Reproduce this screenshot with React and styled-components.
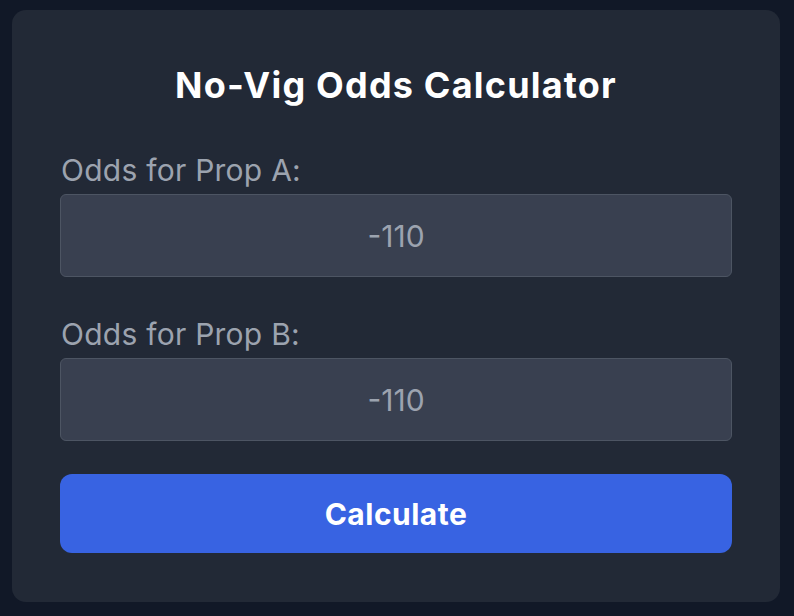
import React from "react";
import styled, { createGlobalStyle } from "styled-components";

const Global = createGlobalStyle`
  html, body {
    margin: 0;
    padding: 0;
    background: #111827;
  }
  body {
    font-family: Inter, "Noto Sans", "Liberation Sans", sans-serif;
  }
  * { box-sizing: border-box; }
`;

const Page = styled.div`
  width: 794px;
  height: 616px;
  padding: 10px 14px 14px 12px;
  background: #111827;
`;

const Card = styled.div`
  width: 768px;
  background: #222936;
  border-radius: 14px;
  padding: 53px 48px 49px;
  display: flex;
  flex-direction: column;
`;

const Title = styled.h1`
  margin: 0 0 45px;
  font-size: 36px;
  line-height: 44px;
  font-weight: 700;
  letter-spacing: 1.2px;
  color: #ffffff;
  text-align: center;
`;

const Field = styled.div`
  display: flex;
  flex-direction: column;
  gap: 6px;
  margin-bottom: ${(p) => p.$after}px;
`;

const Label = styled.label`
  font-size: 30px;
  line-height: 36px;
  letter-spacing: 0.25px;
  color: #9ca3af;
  padding-left: 1px;
`;

const Input = styled.input`
  height: 83px;
  width: 100%;
  background: #394050;
  border: 1.5px solid #4d5563;
  border-radius: 6px;
  color: #9ca3af;
  font-family: inherit;
  font-size: 30px;
  text-align: center;
  outline: none;
  &::placeholder { color: #9ca3af; opacity: 1; }
`;

const Button = styled.button`
  height: 79px;
  width: 100%;
  border: none;
  border-radius: 12px;
  background: #3863e2;
  color: #ffffff;
  font-family: inherit;
  font-size: 30px;
  font-weight: 700;
  letter-spacing: 0.5px;
  cursor: pointer;
`;

export default function App() {
  return (
    <>
      <Global />
      <Page>
        <Card>
          <Title>No-Vig Odds Calculator</Title>
          <Field $after={39}>
            <Label htmlFor="a">Odds for Prop A:</Label>
            <Input id="a" placeholder="-110" />
          </Field>
          <Field $after={33}>
            <Label htmlFor="b">Odds for Prop B:</Label>
            <Input id="b" placeholder="-110" />
          </Field>
          <Button>Calculate</Button>
        </Card>
      </Page>
    </>
  );
}
